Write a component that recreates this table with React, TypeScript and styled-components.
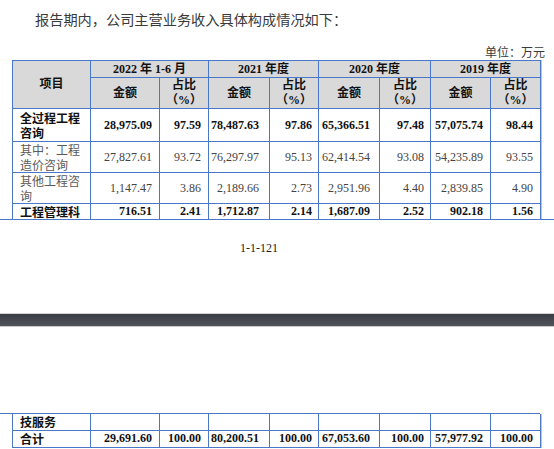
import React from "react";
import styled, { createGlobalStyle, css } from "styled-components";

const Global = createGlobalStyle`
  html, body { margin: 0; padding: 0; background: #fff; }
  body { width: 554px; height: 449px; overflow: hidden; }
`;

const BLUE = "#4a78c8";
const NUM_FONT = `"Liberation Serif", "Noto Sans CJK SC", serif`;
const CJK_FONT = `"Noto Sans CJK SC", "Liberation Serif", sans-serif`;

const Page = styled.div`
  width: 554px;
  height: 449px;
  display: flex;
  flex-direction: column;
  background: #fff;
`;

const Intro = styled.p`
  margin: 0;
  padding: 10px 0 0 35px;
  font-family: ${CJK_FONT};
  font-size: 14.2px;
  line-height: 18px;
  color: #3a3a3a;
  letter-spacing: 0;
`;

const Unit = styled.div`
  margin-top: 17px;
  padding-right: 9px;
  text-align: right;
  font-family: ${CJK_FONT};
  font-size: 12px;
  line-height: 14px;
  color: #3a3a3a;
`;

const TableWrap = styled.div<{ $top?: number }>`
  margin-left: 12px;
  margin-top: ${(p) => p.$top ?? 0}px;
  width: 528px;
`;

const Table = styled.table<{ $openTop?: boolean; $openBottom?: boolean }>`
  border-collapse: collapse;
  table-layout: fixed;
  width: 528px;
  box-shadow: 1px 0 0 #b3c7ea;
  ${(p) =>
    p.$openTop &&
    css`
      tr:first-child td {
        border-top: none;
      }
    `}
  ${(p) =>
    p.$openBottom &&
    css`
      tr:last-child td {
        border-bottom: none;
      }
    `}
`;

const Row = styled.tr<{ $h: number }>`
  height: ${(p) => p.$h}px;
`;

const HeadCell = styled.td`
  border: 1px solid ${BLUE};
  background: #d9d9d9;
  padding: 0;
  text-align: center;
  vertical-align: middle;
  font-family: ${NUM_FONT};
  font-weight: 700;
  font-size: 12px;
  line-height: 15px;
  color: #111;
`;

const LabelCell = styled.td<{ $bold?: boolean }>`
  border: 1px solid ${BLUE};
  padding: 0 0 0 7px;
  vertical-align: middle;
  font-family: ${CJK_FONT};
  font-size: 12px;
  line-height: 15px;
  font-weight: ${(p) => (p.$bold ? 700 : 400)};
  color: ${(p) => (p.$bold ? "#111" : "#5a5a5a")};
  word-break: break-all;
`;

const NumCell = styled.td<{ $bold?: boolean; $pad: number }>`
  border: 1px solid ${BLUE};
  padding: 0 ${(p) => p.$pad}px 0 0;
  vertical-align: middle;
  text-align: right;
  font-family: ${NUM_FONT};
  font-size: 12px;
  line-height: 15px;
  font-weight: ${(p) => (p.$bold ? 700 : 400)};
  color: ${(p) => (p.$bold ? "#111" : "#444")};
  white-space: nowrap;
`;

const Rule = styled.div<{ $w: number }>`
  width: ${(p) => p.$w}px;
  height: 1px;
  background: ${BLUE};
  flex: none;
`;

const PageNo = styled.div`
  margin-top: 21px;
  padding-right: 36px;
  text-align: center;
  font-family: ${NUM_FONT};
  font-size: 12px;
  line-height: 14px;
  color: #222;
`;

const PageBreak = styled.div`
  margin-top: 58px;
  height: 12px;
  border-top: 1px solid #d2d2d2;
  border-bottom: 1px solid #c9c9c9;
  background: linear-gradient(#3a3e42, #50545a);
  flex: none;
`;

const Continuation = styled.div`
  margin-top: 86px;
  display: flex;
  flex-direction: column;
`;

const widths = [78, 69, 49, 61, 49, 61, 51, 60, 50];
const pads = [7, 7, 10, 6, 9, 6, 7, 7];

type DataRow = {
  label: string;
  bold: boolean;
  h: number;
  values: string[];
};

const rows: DataRow[] = [
  {
    label: "全过程工程咨询",
    bold: true,
    h: 33,
    values: ["28,975.09", "97.59", "78,487.63", "97.86", "65,366.51", "97.48", "57,075.74", "98.44"],
  },
  {
    label: "其中：工程造价咨询",
    bold: false,
    h: 31,
    values: ["27,827.61", "93.72", "76,297.97", "95.13", "62,414.54", "93.08", "54,235.89", "93.55"],
  },
  {
    label: "其他工程咨询",
    bold: false,
    h: 31,
    values: ["1,147.47", "3.86", "2,189.66", "2.73", "2,951.96", "4.40", "2,839.85", "4.90"],
  },
  {
    label: "工程管理科",
    bold: true,
    h: 15,
    values: ["716.51", "2.41", "1,712.87", "2.14", "1,687.09", "2.52", "902.18", "1.56"],
  },
];

const contRows: DataRow[] = [
  { label: "技服务", bold: true, h: 16, values: ["", "", "", "", "", "", "", ""] },
  {
    label: "合计",
    bold: true,
    h: 17,
    values: ["29,691.60", "100.00", "80,200.51", "100.00", "67,053.60", "100.00", "57,977.92", "100.00"],
  },
];

const periods = ["2022 年 1-6 月", "2021 年度", "2020 年度", "2019 年度"];

const Cols = () => (
  <colgroup>
    {widths.map((w, i) => (
      <col key={i} style={{ width: w }} />
    ))}
  </colgroup>
);

const DataRows = ({ list }: { list: DataRow[] }) => (
  <>
    {list.map((r) => (
      <Row key={r.label} $h={r.h}>
        <LabelCell $bold={r.bold}>{r.label}</LabelCell>
        {r.values.map((v, i) => (
          <NumCell key={i} $bold={r.bold} $pad={pads[i]}>
            {v}
          </NumCell>
        ))}
      </Row>
    ))}
  </>
);

export default function App() {
  return (
    <Page>
      <Global />
      <Intro>报告期内，公司主营业务收入具体构成情况如下：</Intro>
      <Unit>单位：万元</Unit>
      <TableWrap $top={1}>
        <Table $openBottom>
          <Cols />
          <tbody>
            <Row $h={17}>
              <HeadCell rowSpan={2}>项目</HeadCell>
              {periods.map((p) => (
                <HeadCell key={p} colSpan={2}>
                  {p}
                </HeadCell>
              ))}
            </Row>
            <Row $h={31}>
              {periods.map((p) => (
                <React.Fragment key={p}>
                  <HeadCell>金额</HeadCell>
                  <HeadCell>
                    占比
                    <br />（%）
                  </HeadCell>
                </React.Fragment>
              ))}
            </Row>
            <DataRows list={rows} />
          </tbody>
        </Table>
      </TableWrap>
      <Rule $w={554} />
      <PageNo>1-1-121</PageNo>
      <PageBreak />
      <Continuation>
        <Rule $w={540} />
        <TableWrap>
          <Table $openTop>
            <Cols />
            <tbody>
              <DataRows list={contRows} />
            </tbody>
          </Table>
        </TableWrap>
      </Continuation>
    </Page>
  );
}
